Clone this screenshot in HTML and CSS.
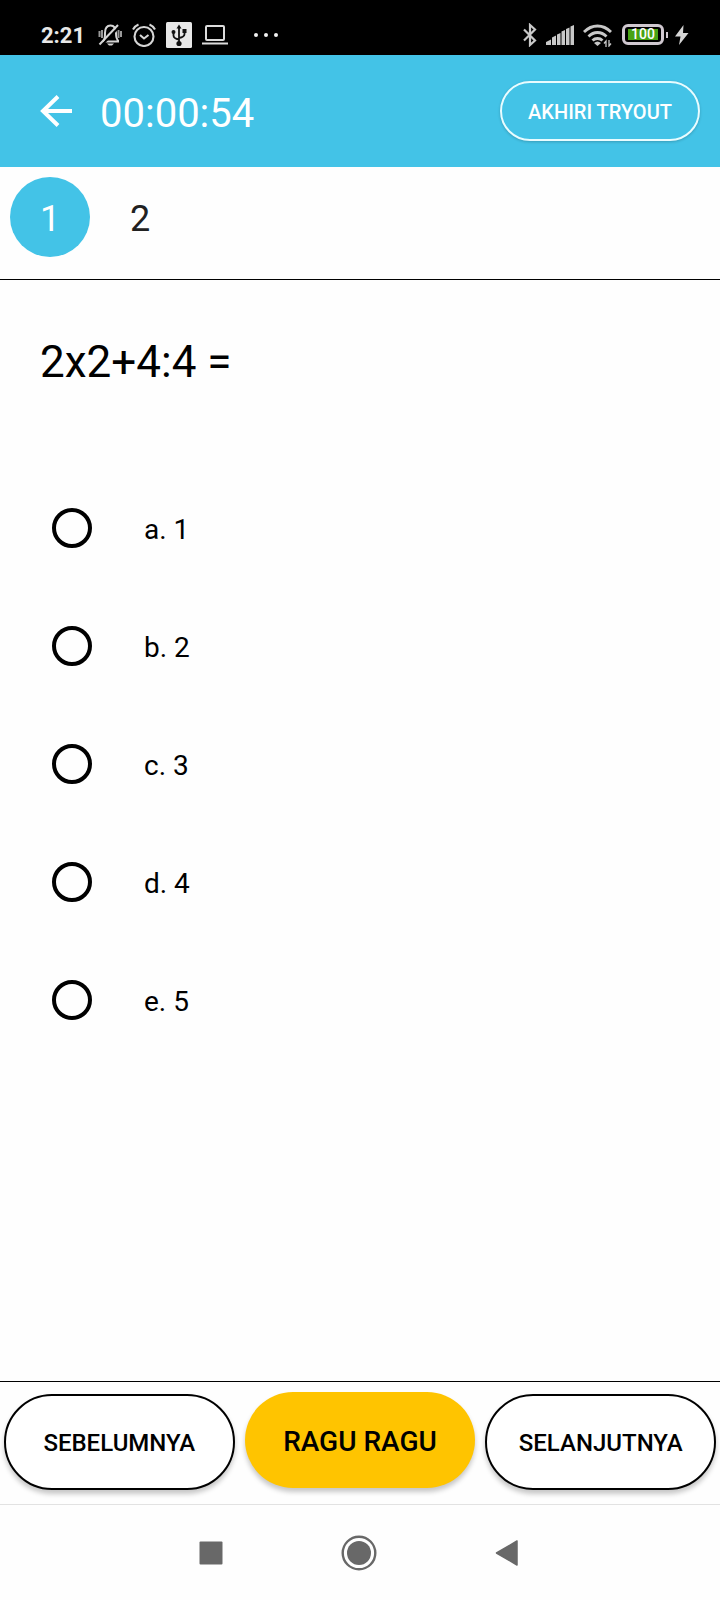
FILE: index.html
```html
<!DOCTYPE html>
<html lang="id">
<head>
<meta charset="utf-8">
<meta name="viewport" content="width=device-width, initial-scale=1">
<title>Tryout</title>
<link rel="stylesheet" href="styles.css">
</head>
<body>
<div class="screen">
  <div class="status">
    <div class="status-group">
      <span class="clock">2:21</span>
      <svg width="24" height="24" viewBox="0 0 24 24" fill="none" stroke="#d6d6d6" stroke-width="2">
        <path d="M5 18.500h16M5.500 18q1.500-2 1.500-8C7 5 9 2.500 12.500 2.500S18 5 18 10q0 6 2.500 8"/>
        <path d="M1.500 8v6M4 7v8M20.500 7v8M23 8v6" stroke="#999"/>
        <path d="M3.500 22.500L22 3" stroke="#000" stroke-width="2"/>
        <path d="M1.500 21.500L20 2"/>
        <path d="M9 20.500h7l-2 2h-3z" fill="#d6d6d6" stroke="none"/>
      </svg>
      <svg width="24" height="24" viewBox="0 0 24 24" fill="none" stroke="#d6d6d6" stroke-width="2.100">
        <circle cx="12" cy="13.500" r="9.500"/>
        <path d="M1 6.500Q3 3 6.500 1.500M23 6.500Q21 3 17.500 1.500M8 12l4 3.500 4.500-3.500"/>
      </svg>
      <svg width="26" height="26" viewBox="0 0 26 26">
        <rect width="26" height="26" rx="1.500" fill="#e8e8e8"/>
        <g fill="none" stroke="#111" stroke-width="1.800"><path d="M13 21V5M13 17.500q-5.500-1-5.500-4V10M13 16q5.500-1 5.500-4V9"/></g>
        <path d="M10.500 6.500L13 2.500l2.500 4z" fill="#111"/><circle cx="13" cy="21.500" r="2.600" fill="#111"/><circle cx="7.500" cy="10" r="2" fill="#111"/><path d="M16.500 7h4v4h-4z" fill="#111"/>
      </svg>
      <svg width="26" height="20" viewBox="0 0 26 20" fill="none" stroke="#dcdcdc" stroke-width="2">
        <rect x="4" y="1" width="18" height="14" rx="1"/><path d="M0 18.500h26"/>
      </svg>
      <svg class="more" width="24" height="4" viewBox="0 0 24 4" fill="#f2f2f2"><circle cx="2" cy="2" r="2"/><circle cx="12" cy="2" r="2"/><circle cx="22" cy="2" r="2"/></svg>
    </div>
    <div class="status-group status-right">
      <svg width="14" height="24" viewBox="0 0 14 24" fill="none" stroke="#c8c8c8" stroke-width="2.200"><path d="M1 6.500l11 11L7 22V2l5 4.500-11 11"/></svg>
      <svg width="28" height="20" viewBox="0 0 28 20" fill="#c8c8c8"><path d="M0 20v-3l5-2.500V20zM6 20v-7.500l4-2V20zM11 20V9.500L14.500 8v12zM15.500 20V6.500L19 5v15zM20 20V4l3.500-1.500V20zM24.500 20V1.500L28 0v20z"/></svg>
      <svg width="30" height="24" viewBox="0 0 30 24" fill="none" stroke="#c8c8c8" stroke-width="2.800">
        <path d="M1 9Q7 3 14.500 3T28 9M5.500 13.500q4-4 9-4t9 4M9.500 17.500q2-2 5-2t5 2"/>
        <path d="M11 20q3.500-3 7 0l-3.500 3z" fill="#c8c8c8" stroke="none"/>
        <path d="M23 24v-6l-2 2.500M26 17v6l2-2.500" stroke-width="1.300"/>
      </svg>
      <div class="battery"><span class="charge">100</span></div>
      <svg width="14" height="20" viewBox="0 0 14 20" fill="#d6d6d6"><path d="M8.500 0L0 11.500h5.500L4 20 13.500 8H8z"/></svg>
    </div>
  </div>

  <header class="header">
    <button class="back" type="button" aria-label="Kembali">
      <svg width="32" height="32" viewBox="0 0 32 32" fill="none" stroke="#fff" stroke-width="4"><path d="M32 16H3M18 1.500L3 16l15 14.500"/></svg>
    </button>
    <span class="timer">00:00:54</span>
    <button class="finish" type="button">AKHIRI TRYOUT</button>
  </header>

  <nav class="numbers">
    <button class="number current" type="button">1</button>
    <button class="number" type="button">2</button>
  </nav>

  <main class="content">
    <h1 class="question" id="question">2x2+4:4 =</h1>
    <div class="options" role="radiogroup" aria-labelledby="question">
      <label class="option"><input class="radio" type="radio" name="answer"><span class="answer">a. 1</span></label>
      <label class="option"><input class="radio" type="radio" name="answer"><span class="answer">b. 2</span></label>
      <label class="option"><input class="radio" type="radio" name="answer"><span class="answer">c. 3</span></label>
      <label class="option"><input class="radio" type="radio" name="answer"><span class="answer">d. 4</span></label>
      <label class="option"><input class="radio" type="radio" name="answer"><span class="answer">e. 5</span></label>
    </div>
  </main>

  <footer class="actions">
    <button class="action" type="button">SEBELUMNYA</button>
    <button class="action doubt" type="button">RAGU RAGU</button>
    <button class="action" type="button">SELANJUTNYA</button>
  </footer>

  <div class="system">
    <button class="key" type="button" aria-label="Aplikasi terbaru"><svg width="24" height="24" viewBox="0 0 24 24"><rect x=".5" y=".5" width="23" height="23" rx="1" fill="#686868"/></svg></button>
    <button class="key" type="button" aria-label="Beranda"><svg width="36" height="36" viewBox="0 0 36 36"><circle cx="18" cy="18" r="16.300" fill="none" stroke="#686868" stroke-width="2.400"/><circle cx="18" cy="18" r="12" fill="#686868"/></svg></button>
    <button class="key" type="button" aria-label="Kembali ke layar sebelumnya"><svg width="24" height="26" viewBox="0 0 24 26"><path d="M1.500 13L22 1v24z" fill="#686868" stroke="#686868" stroke-width="1.500" stroke-linejoin="round"/></svg></button>
  </div>
</div>
</body>
</html>
```

FILE: styles.css
```css
* {
  box-sizing: border-box;
}

body {
  margin: 0;
  background: #fefefe;
  color: #000;
  font-family: Roboto, "Liberation Sans", sans-serif;
}

button {
  margin: 0;
  padding: 0;
  border: 0;
  background: none;
  color: inherit;
  font: inherit;
}

svg {
  display: block;
  flex: none;
}

.screen {
  display: flex;
  flex-direction: column;
  min-height: 100vh;
}

.status {
  display: flex;
  justify-content: space-between;
  height: 55px;
  padding: 14px 31px 0 41px;
  background: #000;
}

.status-group {
  display: flex;
  align-items: center;
  gap: 10px;
}

.status-right {
  gap: 9px;
}

.clock {
  margin-right: 3px;
  padding-top: 2px;
  color: #e8e8e8;
  font-size: 22px;
  font-weight: 700;
}

.more {
  margin-left: 16px;
}

.battery {
  position: relative;
  width: 42px;
  height: 21px;
  margin-right: 2px;
  padding: 2px 3px;
  border: 3px solid #d0c8d0;
  border-radius: 6px;
}

.battery::after {
  content: "";
  position: absolute;
  top: 5px;
  right: -7px;
  width: 2px;
  height: 6px;
  background: #d0c8d0;
}

.charge {
  display: block;
  background: #48a314;
  color: #fff;
  font-size: 14px;
  font-weight: 500;
  line-height: 11px;
  text-align: center;
}

.header {
  display: flex;
  align-items: center;
  padding: 26px 20px 26px 40px;
  background: #43c3e7;
  color: #fff;
}

.timer {
  margin-left: 28px;
  padding-top: 6px;
  font-size: 40px;
  line-height: 48px;
}

.finish {
  width: 200px;
  height: 60px;
  margin-left: auto;
  padding-top: 2px;
  border: 2px solid #e8fcff;
  border-radius: 30px;
  background: #43c3e7;
  box-shadow: 0 1px 3px rgba(0, 0, 0, 0.2);
  font-size: 20px;
  font-weight: 500;
}

.numbers {
  display: flex;
  gap: 10px;
  padding: 10px 10px 22px;
  border-bottom: 1px solid #000;
}

.number {
  width: 80px;
  height: 80px;
  padding-top: 4px;
  border-radius: 50%;
  color: #212121;
  font-size: 36px;
}

.current {
  background: #43c3e7;
  color: #fff;
}

.content {
  flex: 1;
  padding: 56px 40px;
}

.question {
  margin: 0;
  font-size: 44px;
  font-weight: 400;
  line-height: 52px;
}

.options {
  padding: 81px 12px 0;
}

.option {
  display: flex;
  align-items: center;
  gap: 52px;
  height: 118px;
  font-size: 28px;
}

.answer {
  padding-top: 2px;
}

.radio {
  appearance: none;
  flex: none;
  width: 40px;
  height: 40px;
  margin: 0;
  border: 4px solid #000;
  border-radius: 50%;
}

.radio:checked {
  background: radial-gradient(#000 50%, transparent 52%);
}

.actions {
  display: grid;
  grid-template-columns: repeat(3, 1fr);
  gap: 10px;
  padding: 12px 4px 14px;
  border-top: 1px solid #000;
}

.action {
  height: 96px;
  padding-top: 2px;
  border: 2px solid #000;
  border-radius: 48px;
  background: #fff;
  box-shadow: 0 4px 5px rgba(0, 0, 0, 0.22);
  font-size: 24px;
  font-weight: 500;
}

.doubt {
  margin-top: -2px;
  border: 0;
  background: #ffc400;
  font-size: 28px;
}

.system {
  display: flex;
  justify-content: center;
  align-items: center;
  gap: 118px;
  height: 96px;
  padding-right: 2px;
  border-top: 1px solid #e2e2e2;
}

.key {
  display: flex;
}
```
